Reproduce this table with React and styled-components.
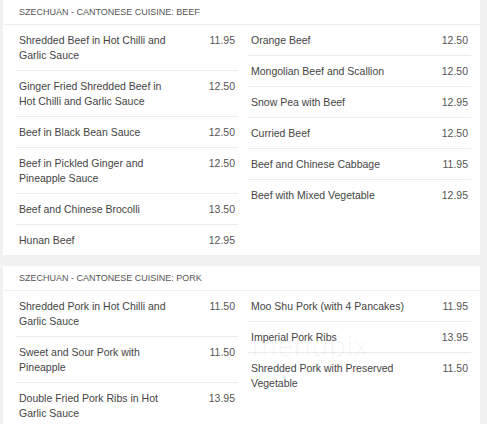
import React from "react";
import styled, { createGlobalStyle } from "styled-components";

const beef = {
  title: "Szechuan - Cantonese Cuisine: Beef",
  left: [
    ["Shredded Beef in Hot Chilli and Garlic Sauce", "11.95"],
    ["Ginger Fried Shredded Beef in Hot Chilli and Garlic Sauce", "12.50"],
    ["Beef in Black Bean Sauce", "12.50"],
    ["Beef in Pickled Ginger and Pineapple Sauce", "12.50"],
    ["Beef and Chinese Brocolli", "13.50"],
    ["Hunan Beef", "12.95"],
  ],
  right: [
    ["Orange Beef", "12.50"],
    ["Mongolian Beef and Scallion", "12.50"],
    ["Snow Pea with Beef", "12.95"],
    ["Curried Beef", "12.50"],
    ["Beef and Chinese Cabbage", "11.95"],
    ["Beef with Mixed Vegetable", "12.95"],
  ],
};

const pork = {
  title: "Szechuan - Cantonese Cuisine: Pork",
  left: [
    ["Shredded Pork in Hot Chilli and Garlic Sauce", "11.50"],
    ["Sweet and Sour Pork with Pineapple", "11.50"],
    ["Double Fried Pork Ribs in Hot Garlic Sauce", "13.95"],
  ],
  right: [
    ["Moo Shu Pork (with 4 Pancakes)", "11.95"],
    ["Imperial Pork Ribs", "13.95"],
    ["Shredded Pork with Preserved Vegetable", "11.50"],
  ],
};

export default function App() {
  return (
    <>
      <Global />
      <Page>
        <Section data={beef} />
        <Section data={pork} />
        <Watermark>menupix</Watermark>
      </Page>
    </>
  );
}

function Section({ data }) {
  return (
    <Card>
      <Header>{data.title}</Header>
      <Columns>
        <Column items={data.left} />
        <Column items={data.right} />
      </Columns>
    </Card>
  );
}

function Column({ items }) {
  return (
    <List>
      {items.map(([name, price]) => (
        <Item key={name}>
          <Name>{name}</Name>
          <Price>{price}</Price>
        </Item>
      ))}
    </List>
  );
}

const Global = createGlobalStyle`
  html, body { margin: 0; padding: 0; background: #f1f1f1; }
  body { font-family: "Liberation Sans", Arial, sans-serif; }
`;

const Page = styled.div`
  position: relative;
  width: 487px;
  height: 424px;
  overflow: hidden;
  padding-left: 3px;
  box-sizing: border-box;
`;

const Card = styled.div`
  width: 477px;
  background: #fff;
  margin-bottom: 11px;
`;

const Header = styled.div`
  height: 25px;
  line-height: 25px;
  padding-left: 16px;
  font-size: 9px;
  color: #555;
  text-transform: uppercase;
  border-bottom: 1px solid #eeeeee;
  box-sizing: border-box;
`;

const Columns = styled.div`
  display: grid;
  grid-template-columns: 222px 223px;
  column-gap: 10px;
  padding: 0 9px 0 13px;
`;

const List = styled.div`
  display: flex;
  flex-direction: column;
`;

const Item = styled.div`
  display: flex;
  justify-content: space-between;
  align-items: flex-start;
  padding: 8px 3px 7px;
  border-bottom: 1px solid #ececec;
  font-size: 10.5px;
  line-height: 15px;
  color: #444;

  &:last-child {
    border-bottom: none;
  }
`;

const Name = styled.div`
  max-width: 160px;
`;

const Price = styled.div`
  color: #555;
`;

const Watermark = styled.div`
  position: absolute;
  left: 252px;
  top: 326px;
  font-size: 28px;
  font-weight: 300;
  letter-spacing: 1px;
  color: rgba(0, 0, 0, 0.06);
  font-family: "Open Sans", sans-serif;
  pointer-events: none;
`;
